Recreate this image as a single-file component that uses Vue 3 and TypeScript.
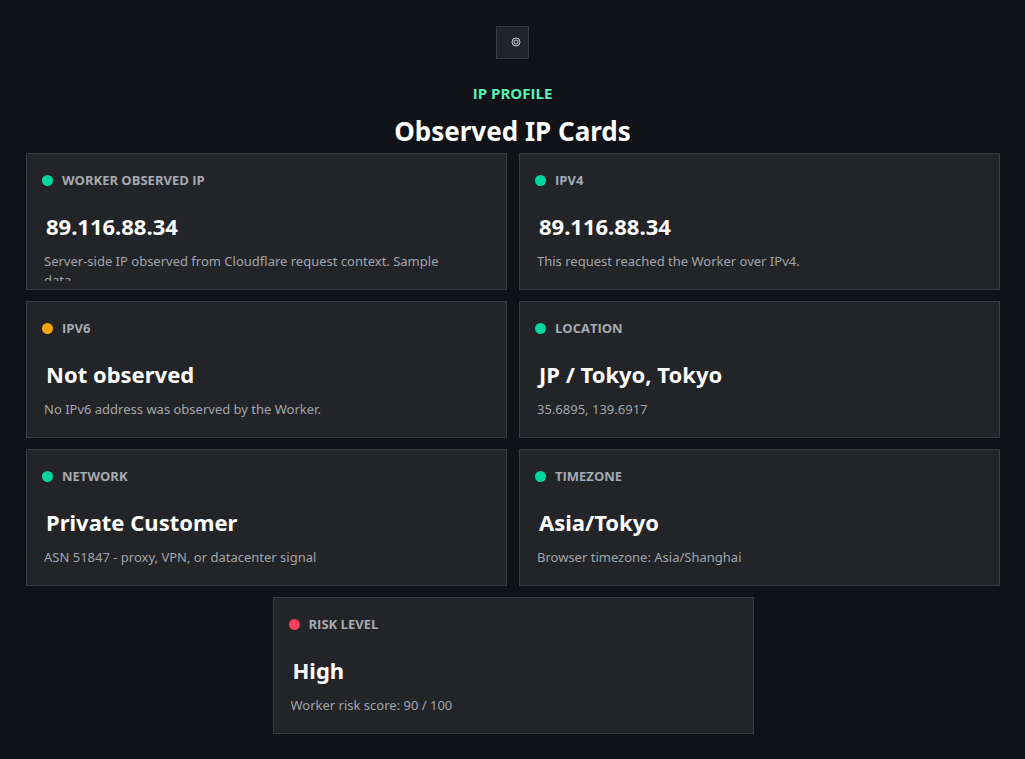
<script setup lang="ts">
type Status = 'good' | 'warn' | 'bad'

interface ProfileCard {
  label: string
  value: string
  detail: string
  status: Status
}

const cards: ProfileCard[] = [
  {
    label: 'WORKER OBSERVED IP',
    value: '89.116.88.34',
    detail: 'Server-side IP observed from Cloudflare request context. Sample data.',
    status: 'good',
  },
  { label: 'IPV4', value: '89.116.88.34', detail: 'This request reached the Worker over IPv4.', status: 'good' },
  { label: 'IPV6', value: 'Not observed', detail: 'No IPv6 address was observed by the Worker.', status: 'warn' },
  { label: 'LOCATION', value: 'JP / Tokyo, Tokyo', detail: '35.6895, 139.6917', status: 'good' },
  {
    label: 'NETWORK',
    value: 'Private Customer',
    detail: 'ASN 51847 - proxy, VPN, or datacenter signal',
    status: 'good',
  },
  { label: 'TIMEZONE', value: 'Asia/Tokyo', detail: 'Browser timezone: Asia/Shanghai', status: 'good' },
  { label: 'RISK LEVEL', value: 'High', detail: 'Worker risk score: 90 / 100', status: 'bad' },
]
</script>

<template>
  <main class="page">
    <header class="header">
      <div class="badge">
        <svg class="badge-icon" viewBox="0 0 10 10" aria-hidden="true">
          <circle cx="5" cy="5" r="4" />
          <circle cx="5" cy="5" r="2" />
        </svg>
      </div>
      <p class="eyebrow">IP PROFILE</p>
      <h1 class="title">Observed IP Cards</h1>
    </header>
    <section class="cards">
      <article v-for="card in cards" :key="card.label" class="card">
        <h2 class="label"><span class="dot" :class="card.status"></span>{{ card.label }}</h2>
        <p class="value">{{ card.value }}</p>
        <p class="detail">{{ card.detail }}</p>
      </article>
    </section>
  </main>
</template>

<style>
html,
body {
  background: #111217;
}
</style>

<style scoped>
.page {
  box-sizing: border-box;
  min-height: 100vh;
  padding: 26px 0 24px;
  background: #111217;
  color: #ffffff;
  font-family: 'Segoe UI', 'Noto Sans', 'Open Sans', sans-serif;
}

.header {
  display: flex;
  flex-direction: column;
  align-items: center;
}

.badge {
  box-sizing: border-box;
  display: flex;
  align-items: flex-start;
  justify-content: flex-end;
  width: 33px;
  height: 33px;
  padding: 10px 7px 0 0;
  border: 1px solid #393a3f;
  background: #20232a;
}

.badge-icon {
  width: 10px;
  height: 10px;
  fill: none;
  stroke: #c9d3df;
  stroke-width: 1;
}

.eyebrow {
  margin: 24px 0 0;
  color: #5af2b4;
  font-family: 'Segoe UI', 'Open Sans', sans-serif;
  font-size: 15px;
  line-height: 20px;
  font-weight: 700;
}

.title {
  margin: 8px 0 0;
  font-size: 26px;
  line-height: 40px;
  font-weight: 700;
}

.cards {
  display: flex;
  flex-wrap: wrap;
  justify-content: center;
  gap: 11px 12px;
  margin: 2px 25px 0 26px;
}

.card {
  box-sizing: border-box;
  width: calc(50% - 6px);
  height: 137px;
  padding: 16px 17px 8px;
  border: 1px solid #3a3b3f;
  background: #232427;
}

.label {
  display: flex;
  align-items: center;
  gap: 9px;
  margin: 0 0 0 -2px;
  color: #a6aab3;
  font-family: 'Segoe UI', 'Open Sans', sans-serif;
  font-size: 13px;
  line-height: 20px;
  font-weight: 700;
}

.dot {
  width: 11px;
  height: 11px;
  border-radius: 50%;
}

.good {
  background: #00d69e;
}

.warn {
  background: #f9a603;
}

.bad {
  background: #f43f5e;
}

.value {
  margin: 20px 0 0 2px;
  font-size: 22px;
  line-height: 32px;
  font-weight: 700;
}

.detail {
  height: 29px;
  margin: 10px 0 0;
  overflow: hidden;
  padding-right: 28px;
  color: #a0a4ad;
  font-size: 13px;
  line-height: 19px;
}
</style>
